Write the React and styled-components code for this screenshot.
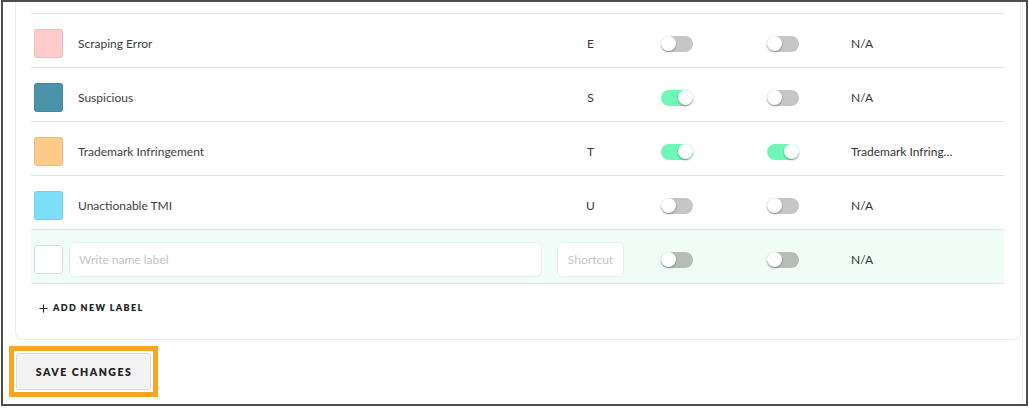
import React from "react";
import styled, { createGlobalStyle } from "styled-components";

const GlobalStyle = createGlobalStyle`
  html, body {
    margin: 0;
    padding: 0;
    background: #fff;
  }
  body {
    font-family: Lato, "Open Sans", Arial, sans-serif;
    color: #333;
  }
`;

const Frame = styled.div`
  box-sizing: border-box;
  width: 1027px;
  height: 406px;
  margin-left: 1px;
  border: 2px solid #4d4d4d;
  padding: 0 5px;
  overflow: hidden;
  background: #fff;
  box-shadow: inset -3px 0 0 #fff, inset -4px 0 0 #f0f0f0;
`;

const Card = styled.div`
  margin-left: 7px;
  width: 1006px;
  box-sizing: border-box;
  border: 1px solid #ececec;
  border-top: none;
  border-radius: 0 0 8px 8px;
  padding: 11px 16px 0 15px;
`;

const Table = styled.div`
  border-top: 1px solid #e3e3e3;
`;

const Row = styled.div`
  display: grid;
  grid-template-columns: 35px 488px 67px 106px 106px 1fr;
  align-items: center;
  box-sizing: border-box;
  height: 54px;
  padding: 6px 0 0 3px;
  border-bottom: 1px solid #e3e3e3;
  background: ${({ $draft }) => ($draft ? "#effdf6" : "transparent")};
`;

const Swatch = styled.div`
  width: 29px;
  height: 29px;
  box-sizing: border-box;
  border-radius: 3px;
  background: ${({ $color }) => $color || "#fff"};
  border: 1px solid ${({ $color }) => ($color ? "rgba(0,0,0,0.07)" : "#dcdcdc")};
`;

const Name = styled.div`
  padding-left: 9px;
  font-size: 12px;
  color: #3d3d3d;
`;

const Shortcut = styled.div`
  text-align: center;
  font-size: 12px;
  color: #4a2e34;
`;

const Input = styled.input`
  display: block;
  box-sizing: border-box;
  height: 35px;
  border: 1px solid #e2f1ea;
  border-radius: 6px;
  background: #fff;
  font-family: inherit;
  font-size: 12px;
  color: #333;
  outline: none;
  padding: 0 ${({ $center }) => ($center ? "0" : "9px")};
  text-align: ${({ $center }) => ($center ? "center" : "left")};
  width: ${({ $center }) => ($center ? "67px" : "473px")};
  &::placeholder {
    color: #c3c3c9;
  }
`;

const ToggleCell = styled.div`
  display: flex;
  justify-content: center;
`;

const Track = styled.div`
  position: relative;
  width: 32px;
  height: 16px;
  border-radius: 8px;
  background: ${({ $on, $muted }) => ($on ? "#6ff6b9" : $muted ? "#b6bdb8" : "#c6c6c6")};
`;

const Knob = styled.div`
  position: absolute;
  top: 0;
  left: ${({ $on }) => ($on ? "17px" : "0")};
  width: 15px;
  height: 15px;
  border-radius: 50%;
  background: #fff;
  box-shadow: 0 1px 2px rgba(0, 0, 0, 0.35);
`;

const Linked = styled.div`
  padding-left: 15px;
  font-size: 12px;
  color: #333;
  white-space: nowrap;
  overflow: hidden;
  text-overflow: ellipsis;
  max-width: 102px;
`;

const AddLabel = styled.div`
  display: flex;
  align-items: center;
  gap: 5px;
  padding: 18px 0 25px 8px;
  font-size: 9px;
  line-height: 12px;
  font-weight: 800;
  letter-spacing: 1.35px;
  color: #222;
`;

const Plus = styled.svg`
  width: 9px;
  height: 9px;
`;

const Highlight = styled.div`
  display: inline-block;
  margin-top: 6px;
  margin-left: 1px;
  border: 5px solid #f5a623;
  padding: 2px;
`;

const SaveButton = styled.button`
  display: block;
  width: 135px;
  height: 37px;
  box-sizing: border-box;
  border: 1px solid #dcdcdc;
  border-radius: 3px;
  background: #f3f3f3;
  font-family: inherit;
  font-size: 10.5px;
  font-weight: 800;
  letter-spacing: 1.5px;
  color: #222;
  padding: 0 0 0 1px;
`;

const Toggle = ({ on, muted }) => (
  <ToggleCell>
    <Track $on={on} $muted={muted}>
      <Knob $on={on} />
    </Track>
  </ToggleCell>
);

const labels = [
  { name: "Scraping Error", color: "#ffcccb", key: "E", a: false, b: false, link: "N/A" },
  { name: "Suspicious", color: "#4a93a9", key: "S", a: true, b: false, link: "N/A" },
  { name: "Trademark Infringement", color: "#ffcb8a", key: "T", a: true, b: true, link: "Trademark Infringement" },
  { name: "Unactionable TMI", color: "#7ddff9", key: "U", a: false, b: false, link: "N/A" },
];

export default function App() {
  return (
    <>
      <GlobalStyle />
      <Frame>
        <Card>
          <Table>
            {labels.map((l) => (
              <Row key={l.name}>
                <Swatch $color={l.color} />
                <Name>{l.name}</Name>
                <Shortcut>{l.key}</Shortcut>
                <Toggle on={l.a} />
                <Toggle on={l.b} />
                <Linked>{l.link}</Linked>
              </Row>
            ))}
            <Row $draft>
              <Swatch />
              <div>
                <Input placeholder="Write name label" />
              </div>
              <div>
                <Input $center placeholder="Shortcut" />
              </div>
              <Toggle muted />
              <Toggle muted />
              <Linked>N/A</Linked>
            </Row>
          </Table>
          <AddLabel>
            <Plus viewBox="0 0 10 10">
              <path d="M5 0.5v9M0.5 5h9" stroke="#222" strokeWidth="1.2" fill="none" />
            </Plus>
            ADD NEW LABEL
          </AddLabel>
        </Card>
        <Highlight>
          <SaveButton>SAVE CHANGES</SaveButton>
        </Highlight>
      </Frame>
    </>
  );
}
